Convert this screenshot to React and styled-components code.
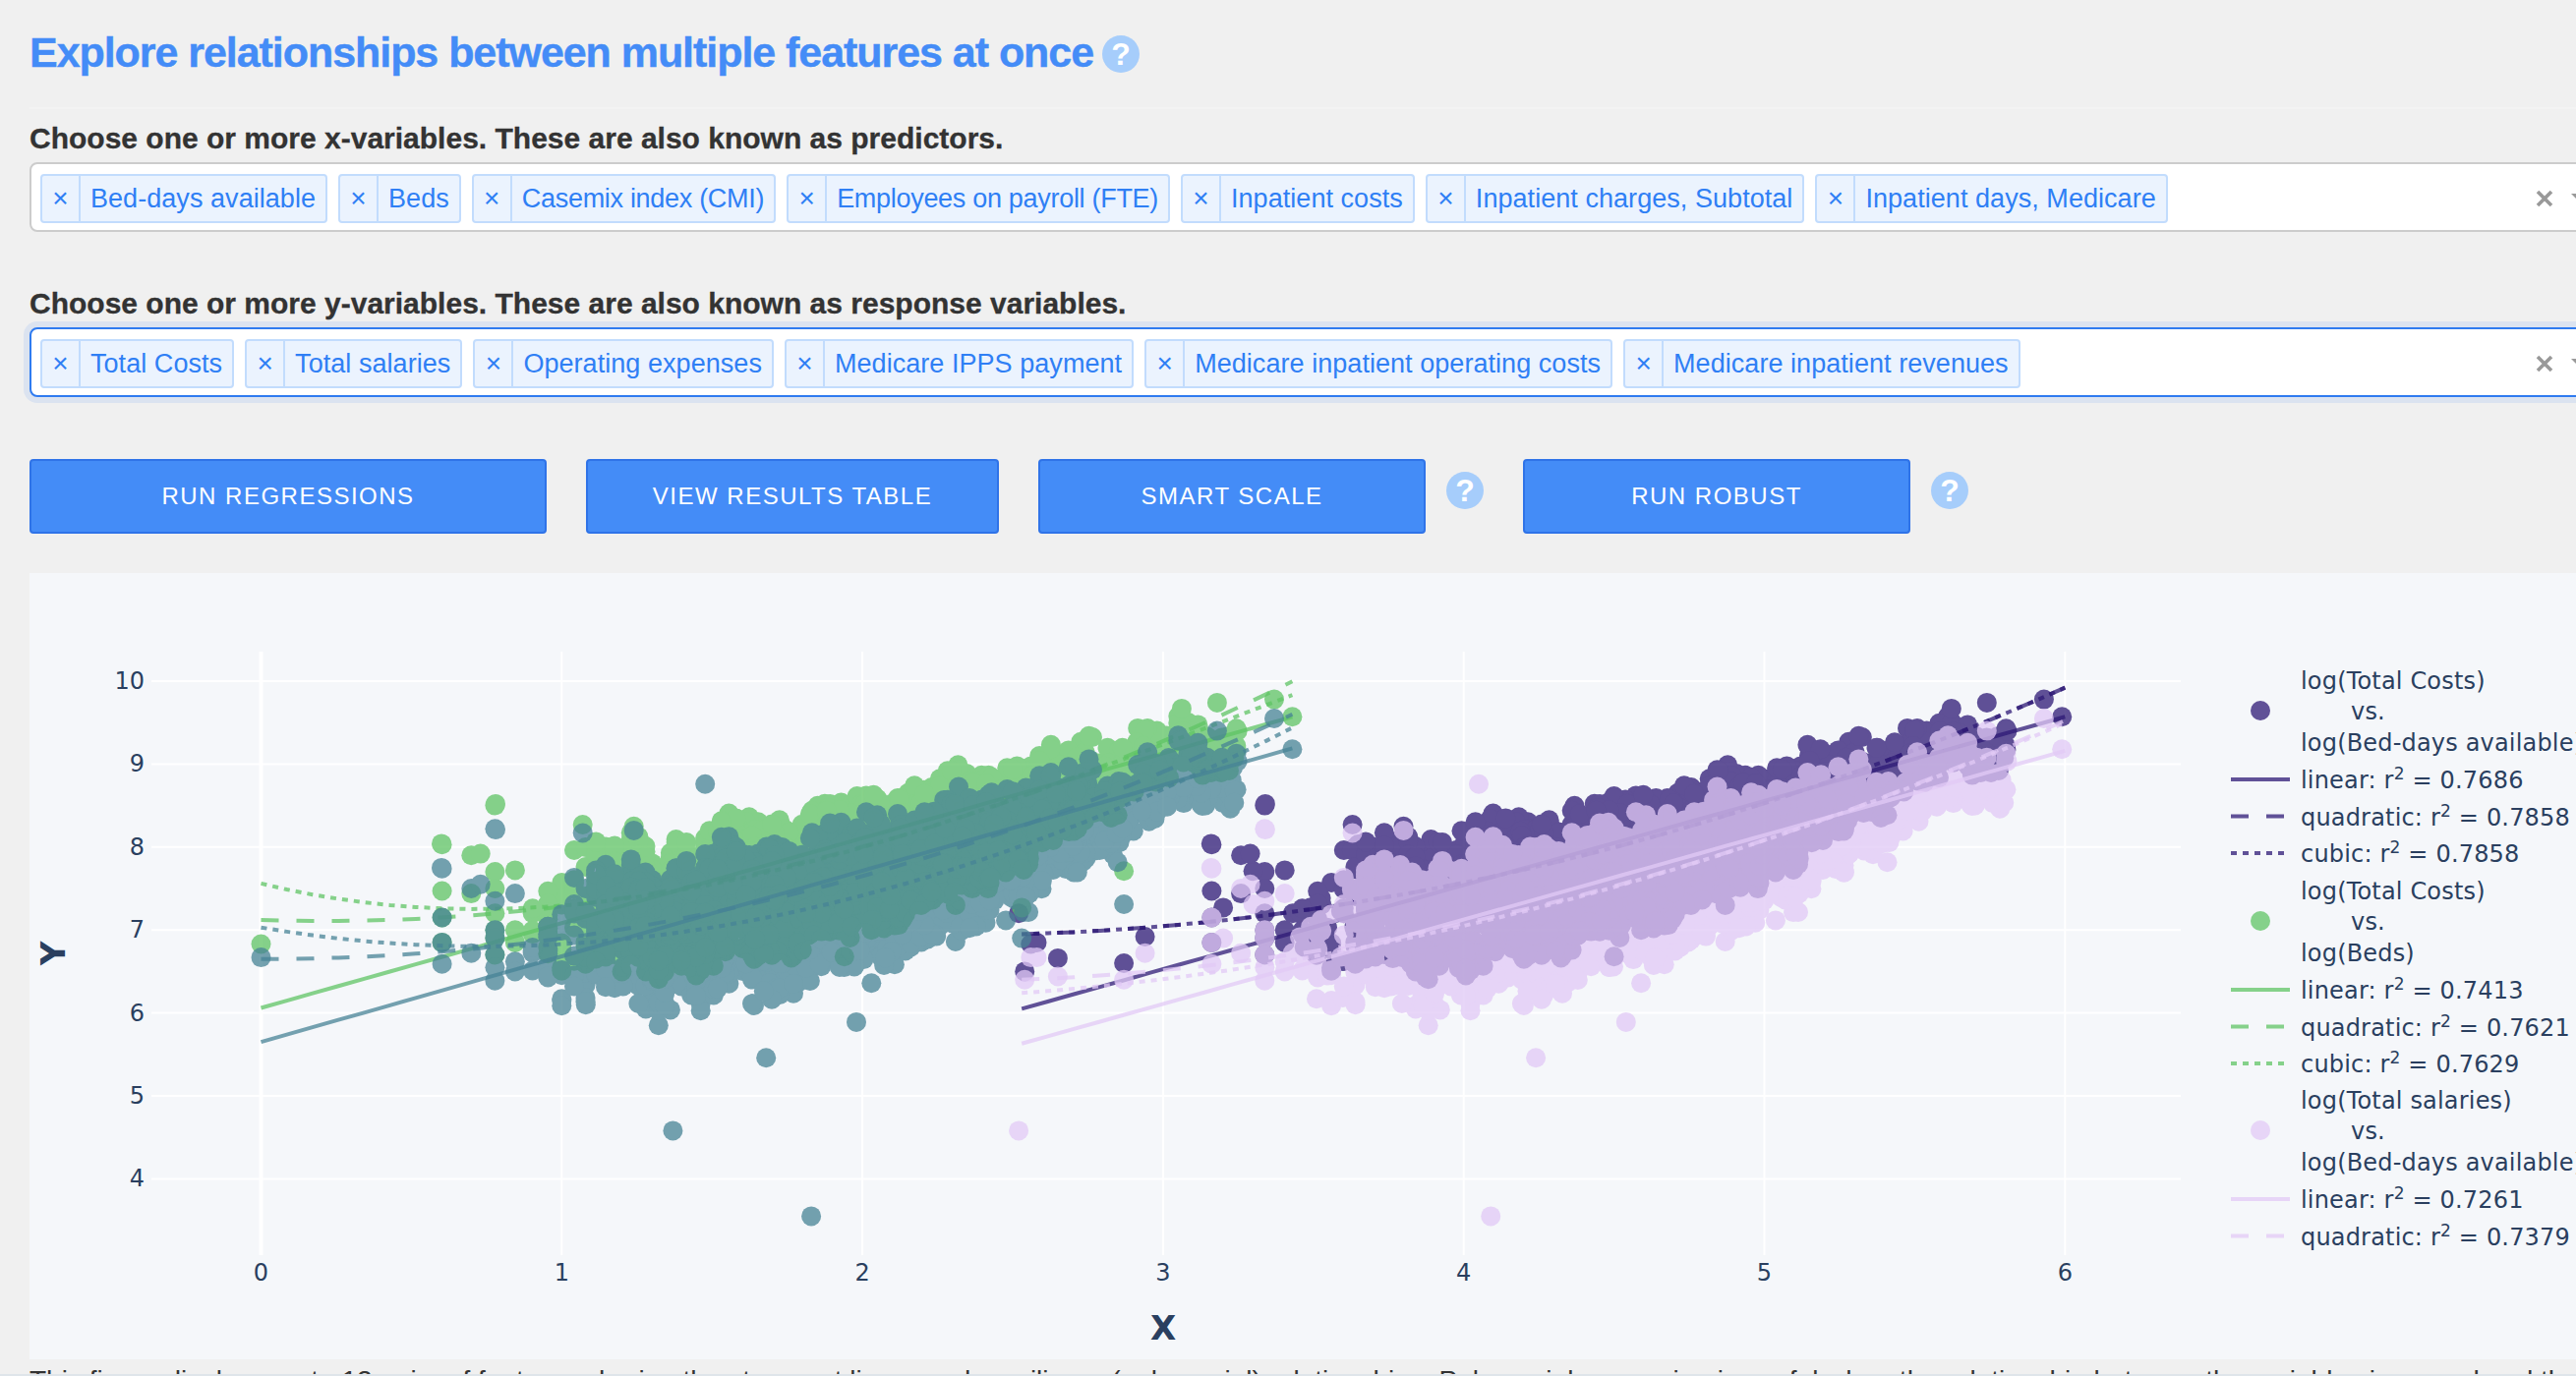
import React, { useMemo } from 'react';
import styled, { createGlobalStyle } from 'styled-components';

const GlobalStyle = createGlobalStyle`
  html, body {
    margin: 0;
    padding: 0;
    background: #f0f0f0;
    overflow: hidden;
  }
  #root {
    width: 2620px;
    height: 1400px;
    overflow: hidden;
  }
`;

const Page = styled.div`
  position: relative;
  width: 2620px;
  height: 1400px;
  overflow: hidden;
  padding-left: 30px;
  box-sizing: border-box;
  font-family: 'Liberation Sans', Arial, sans-serif;
  color: #333;
`;

const TitleRow = styled.div`
  display: flex;
  align-items: center;
  gap: 9px;
  height: 50px;
  padding-top: 30px;
`;

const Title = styled.h1`
  margin: 0 0 5px;
  font-size: 43px;
  line-height: 50px;
  font-weight: 700;
  letter-spacing: -1.05px;
  -webkit-text-stroke: 0.4px #448cf7;
  color: #448cf7;
  white-space: nowrap;
`;

const Help = styled.span`
  display: inline-flex;
  align-items: center;
  justify-content: center;
  flex: none;
  width: 38px;
  height: 38px;
  border-radius: 50%;
  background: #a6cdfb;
  color: #fff;
  font-size: 32px;
  font-weight: 700;
  line-height: 1;
  margin-top: ${(p) => p.$top || 0}px;
`;

const Rule = styled.hr`
  margin: 29px 0 0;
  border: 0;
  height: 2px;
  background: #f3f3f3;
`;

const Label = styled.div`
  margin-top: ${(p) => p.$top}px;
  height: 30px;
  line-height: 30px;
  font-size: 30px;
  font-weight: 700;
  -webkit-text-stroke: 0.3px #333;
  color: #333;
  white-space: nowrap;
`;

const Select = styled.div`
  display: flex;
  align-items: center;
  box-sizing: border-box;
  width: 2640px;
  height: 71px;
  margin-top: 9px;
  padding: 3px 0 0 9px;
  gap: 11px;
  background: #fff;
  border: 2px solid ${(p) => (p.$focused ? '#2f7bf0' : '#ccc')};
  border-radius: 8px;
  box-shadow: ${(p) => (p.$focused ? '0 0 0 6px #dbe3f0' : 'none')};
`;

const Tag = styled.div`
  display: flex;
  align-items: stretch;
  flex: none;
  box-sizing: border-box;
  height: 50px;
  background: #ebf3fe;
  border: 2px solid #c2dcfd;
  border-radius: 4px;
  color: #2f7ff5;
  font-size: 27px;
`;

const TagRemove = styled.span`
  display: flex;
  align-items: center;
  justify-content: center;
  box-sizing: border-box;
  width: 39px;
  border-right: 2px solid #c2dcfd;
  font-size: 28px;
`;

const TagLabel = styled.span`
  display: flex;
  align-items: center;
  padding: 0 10px;
  letter-spacing: ${(p) => (p.$tight ? '-0.3px' : '0.05px')};
  white-space: nowrap;
`;

const Controls = styled.div`
  display: flex;
  align-items: center;
  gap: 18px;
  margin-left: auto;
  margin-right: 33px;
`;

const ClearIcon = styled.svg`
  display: block;
  width: 18px;
  height: 18px;
`;

const Arrow = styled.span`
  display: block;
  width: 0;
  height: 0;
  border-style: solid;
  border-width: 10px 10px 0;
  border-color: #999 transparent transparent;
`;

const ButtonRow = styled.div`
  display: flex;
  align-items: flex-start;
  gap: 40px;
  height: 76px;
  margin-top: 63px;
`;

const ButtonGroup = styled.div`
  display: flex;
  align-items: flex-start;
  gap: 21px;
`;

const ActionButton = styled.button`
  box-sizing: border-box;
  width: ${(p) => p.$width}px;
  height: 76px;
  padding: 0;
  background: #448cf7;
  border: 2px solid #2f73e8;
  border-radius: 4px;
  color: #fff;
  font-family: inherit;
  font-size: 24px;
  letter-spacing: 1.5px;
  text-transform: uppercase;
`;

const PlotFrame = styled.div`
  width: 2620px;
  height: 800px;
  margin-top: 40px;
  background: #f5f7fa;
`;

const PlotSvg = styled.svg`
  display: block;
  width: 2620px;
  height: 800px;
  font-family: 'DejaVu Sans', Verdana, sans-serif;
  fill: #2a3f5f;
`;

const LegendText = styled.text`
  font-size: 24px;
  letter-spacing: 0.18px;
`;

const Note = styled.p`
  margin: 5px 0 0;
  font-size: 28px;
  line-height: 34px;
  color: #333;
  white-space: nowrap;
`;

const BottomEdge = styled.div`
  position: absolute;
  left: 0;
  right: 0;
  bottom: 0;
  height: 2px;
  background: #dfe5ea;
`;

const X_OPTIONS = [
  'Bed-days available',
  'Beds',
  'Casemix index (CMI)',
  'Employees on payroll (FTE)',
  'Inpatient costs',
  'Inpatient charges, Subtotal',
  'Inpatient days, Medicare',
];

const Y_OPTIONS = [
  'Total Costs',
  'Total salaries',
  'Operating expenses',
  'Medicare IPPS payment',
  'Medicare inpatient operating costs',
  'Medicare inpatient revenues',
];

// these two set narrower than the others in the reference
const TIGHT_OPTIONS = ['Casemix index (CMI)', 'Employees on payroll (FTE)'];

// chart scales, page pixels
const px = (v) => 265.5 + 305.8 * v;
const py = (v) => 693 + (10 - v) * 84.4;

const PURPLE = '#2d1975';
const GREEN = '#5fc464';
const LILAC = '#e1c9f6';
const TEAL = '#478395';

const rng = (seed) => () => {
  seed |= 0;
  seed = (seed + 0x6d2b79f5) | 0;
  let t = Math.imul(seed ^ (seed >>> 15), 1 | seed);
  t = (t + Math.imul(t ^ (t >>> 7), 61 | t)) ^ t;
  return ((t ^ (t >>> 14)) >>> 0) / 4294967296;
};

const ENVELOPE = [
  [0.9, 7.7, 6.75],
  [1, 8.1, 6.6],
  [1.3, 8.1, 6.5],
  [1.6, 8.3, 6.6],
  [1.84, 8.45, 6.85],
  [2.09, 8.7, 7.1],
  [2.31, 8.85, 7.35],
  [2.54, 9.05, 7.85],
  [2.75, 9.25, 8.25],
  [3, 9.45, 8.8],
  [3.25, 9.5, 8.95],
];

const envelope = (x) => {
  const wobble = 0.09 * Math.sin(x * 17) + 0.06 * Math.sin(x * 41 + 1);
  for (let i = 1; i < ENVELOPE.length; i++) {
    const [x1, t1, b1] = ENVELOPE[i];
    if (x <= x1) {
      const [x0, t0, b0] = ENVELOPE[i - 1];
      const k = Math.max(0, (x - x0) / (x1 - x0));
      return [t0 + (t1 - t0) * k + wobble, b0 + (b1 - b0) * k + wobble];
    }
  }
  const last = ENVELOPE[ENVELOPE.length - 1];
  return [last[1], last[2]];
};

// [log beds, log costs, log salaries, log bed-days]
const LOOSE_POINTS = [
  [0, 6.83, 6.67],
  [0.602, 8.03, 7.74],
  [0.602, 7.47, 7.15],
  [0.602, 7.15, 6.85],
  [0.602, 6.85, 6.59],
  [0.699, 7.9, 7.5],
  [0.699, 7.44, 6.72],
  [0.778, 8.5, 8.22],
  [0.778, 7.7, 7.35],
  [0.778, 7.5, 7.0],
  [0.778, 7.2, 6.9],
  [0.778, 7.0, 6.7],
  [0.778, 6.9, 6.55],
  [0.778, 6.7, 6.39],
  [0.845, 7.72, 7.44],
  [0.845, 7.0, 6.62],
  [0.845, 6.85, 6.5],
  [1.477, 8.0, 8.76, 4.05],
  [1.37, 7.2, 4.58, 2.52],
  [1.68, 7.0, 5.46],
  [1.98, 7.4, 5.89],
  [1.83, 7.3, 3.55, 4.09],
  [1.94, 6.68, 6.9],
  [2.53, 7.27, 6.9, 3.2],
  [2.87, 7.71, 7.31, 3.3],
  [0.78, 8.52, 8.21, 3.34],
  [0.6, 8.04, 7.75, 3.16],
  [0.73, 7.92, 7.55, 3.29],
  [1.07, 8.27, 8.17, 3.63],
  [1.24, 8.25, 8.2, 3.8],
  [3.43, 9.57, 9.18],
  [3.18, 9.74, 9.4],
  [3.37, 9.78, 9.55],
  [3.2, 9.2, 8.53],
  [1.2, 6.5, 6.4, 2.54],
  [1.25, 6.85, 6.67, 2.58],
  [1.3, 6.66, 6.44, 2.65],
  [1.4, 6.6, 6.4, 2.87],
  [1.5, 6.92, 6.72, 2.94],
  [1.08, 6.6, 6.1],
  [1.28, 6.5, 6.05],
  [1.64, 6.65, 6.09],
  [2.03, 7.0, 6.36],
  [2.31, 7.3, 6.86],
];

const buildPoints = () => {
  const rand = rng(20481);
  const points = LOOSE_POINTS.map(([x, g, t, d]) => [x, g, t, d === undefined ? x + 2.56 : d]);
  let made = 0;
  while (made < 2400) {
    const n = (rand() + rand() + rand() + rand() - 2) * 1.05 + 1.98;
    if (n < 0.9 || n > 3.25) continue;
    // the small hospitals stand in thin columns, no solid wall at the left
    if (n < 1.1 && rand() < 0.55) continue;
    const x = Math.log10(Math.round(10 ** n));
    const [top, bottom] = envelope(x);
    const spread = rand() < 0.6 ? rand() : (rand() + rand()) / 2;
    const stray = rand() < 0.1 ? (rand() - 0.5) * 0.5 : 0;
    const g = bottom + (top - bottom) * spread + stray;
    const t = g - (0.18 + 0.4 * rand());
    points.push([x, g, t, x + 2.56 - (rand() < 0.25 ? rand() * 0.06 : 0)]);
    made++;
  }
  return points;
};

const sample = (fn, from, to) => {
  const out = [];
  for (let i = 0; i <= 40; i++) {
    const x = from + ((to - from) * i) / 40;
    out.push(`${px(x).toFixed(1)},${py(fn(x)).toFixed(1)}`);
  }
  return out.join(' ');
};

const DASHES = { linear: undefined, quadratic: '18 18', cubic: '6 6' };

const SERIES = [
  {
    color: PURPLE,
    xKey: 3,
    yKey: 1,
    from: 2.53,
    to: 6,
    fits: {
      linear: (x) => 6.05 + ((x - 2.53) * 3.52) / 3.47,
      quadratic: (x) => 6.95 + 0.103 * (x - 2.53) + 0.217 * (x - 2.53) ** 2,
      cubic: (x) => 6.95 + 0.103 * (x - 2.53) + 0.217 * (x - 2.53) ** 2,
    },
  },
  {
    color: GREEN,
    xKey: 0,
    yKey: 1,
    from: 0,
    to: 3.43,
    fits: {
      linear: (x) => 6.06 + (x * 3.51) / 3.43,
      quadratic: (x) => 7.12 - 0.115 * x + 0.278 * x * x,
      cubic: (x) => 7.56 - 0.893 * x + 0.698 * x * x - 0.0713 * x ** 3,
    },
  },
  {
    color: LILAC,
    xKey: 3,
    yKey: 2,
    from: 2.53,
    to: 6,
    fits: {
      linear: (x) => 5.63 + ((x - 2.53) * 3.53) / 3.47,
      quadratic: (x) => 6.4 + 0.141 * (x - 2.53) + 0.219 * (x - 2.53) ** 2,
      cubic: (x) => 6.24 + 0.266 * (x - 2.53) + 0.194 * (x - 2.53) ** 2,
    },
  },
  {
    color: TEAL,
    xKey: 0,
    yKey: 2,
    from: 0,
    to: 3.43,
    fits: {
      linear: (x) => 5.65 + (x * 3.54) / 3.43,
      quadratic: (x) => 6.65 - 0.004 * x + 0.252 * x * x,
      cubic: (x) => 7.03 - 0.6256 * x + 0.4403 * x * x - 0.0155 * x ** 3,
    },
  },
];

const LEGEND = [
  { color: PURPLE, names: ['log(Total Costs)', 'log(Bed-days available)'], top: 693, r2: ['0.7686', '0.7858', '0.7858'] },
  { color: GREEN, names: ['log(Total Costs)', 'log(Beds)'], top: 907, r2: ['0.7413', '0.7621', '0.7629'] },
  { color: LILAC, names: ['log(Total salaries)', 'log(Bed-days available)'], top: 1120, r2: ['0.7261', '0.7379'] },
];

const LegendFit = ({ kind, value, y, color }) => (
  <g>
    <line
      x1="2269"
      x2="2329"
      y1={y - 1}
      y2={y - 1}
      stroke={color}
      strokeWidth="4"
      strokeOpacity="0.75"
      strokeDasharray={DASHES[kind]}
    />
    <LegendText x="2340" y={y + 8}>
      {kind}: r
      <tspan dy="-9" fontSize="17">2</tspan>
      <tspan dy="9"> = {value}</tspan>
    </LegendText>
  </g>
);

const Chart = () => {
  const points = useMemo(buildPoints, []);
  const xTicks = [0, 1, 2, 3, 4, 5, 6];
  const yTicks = [4, 5, 6, 7, 8, 9, 10];

  return (
    <PlotSvg viewBox="30 583 2620 800">
      {xTicks.map((v) => (
        <line key={v} x1={px(v)} x2={px(v)} y1="663" y2="1277" stroke="#fff" strokeWidth={v === 0 ? 4 : 2} />
      ))}
      {yTicks.map((v) => (
        <line key={v} x1="154" x2="2218" y1={py(v)} y2={py(v)} stroke="#fff" strokeWidth="2" />
      ))}

      {/* trace order matters: later traces cover the fit lines of earlier ones */}
      {SERIES.map((s) => (
        <g key={s.color}>
          <g fill={s.color} opacity="0.75">
            {points.map((p, i) => (
              <circle key={i} cx={px(p[s.xKey]).toFixed(1)} cy={py(p[s.yKey]).toFixed(1)} r="10" />
            ))}
          </g>
          <g fill="none" stroke={s.color} strokeWidth="4" strokeOpacity="0.75">
            {Object.keys(s.fits).map((kind) => (
              <polyline key={kind} points={sample(s.fits[kind], s.from, s.to)} strokeDasharray={DASHES[kind]} />
            ))}
          </g>
        </g>
      ))}

      {yTicks.map((v) => (
        <text key={v} x="147" y={py(v) + 8} fontSize="24" textAnchor="end">{v}</text>
      ))}
      {xTicks.map((v) => (
        <text key={v} x={px(v)} y="1303" fontSize="24" textAnchor="middle">{v}</text>
      ))}
      <text x="1183" y="1363" fontSize="34" fontWeight="700" textAnchor="middle">X</text>
      <text transform="translate(66 970) rotate(-90)" fontSize="34" fontWeight="700" textAnchor="middle">Y</text>

      {LEGEND.map((entry) => (
        <g key={entry.top}>
          <circle cx="2299" cy={entry.top + 30} r="10" fill={entry.color} opacity="0.75" />
          <LegendText x="2340" y={entry.top + 8}>{entry.names[0]}</LegendText>
          <LegendText x="2391" y={entry.top + 39}>vs.</LegendText>
          <LegendText x="2340" y={entry.top + 71}>{entry.names[1]}</LegendText>
          {entry.r2.map((value, i) => (
            <LegendFit
              key={value + i}
              kind={['linear', 'quadratic', 'cubic'][i]}
              value={value}
              y={entry.top + 101 + i * 37.5}
              color={entry.color}
            />
          ))}
        </g>
      ))}
    </PlotSvg>
  );
};

const MultiSelect = ({ options, focused }) => (
  <Select $focused={focused}>
    {options.map((option) => (
      <Tag key={option}>
        <TagRemove>×</TagRemove>
        <TagLabel $tight={TIGHT_OPTIONS.includes(option)}>{option}</TagLabel>
      </Tag>
    ))}
    <Controls>
      <ClearIcon viewBox="0 0 18 18">
        <path d="M2 2 L16 16 M16 2 L2 16" stroke="#999" strokeWidth="3.6" fill="none" />
      </ClearIcon>
      <Arrow />
    </Controls>
  </Select>
);

export default function App() {
  return (
    <Page>
      <GlobalStyle />
      <TitleRow>
        <Title>Explore relationships between multiple features at once</Title>
        <Help>?</Help>
      </TitleRow>
      <Rule />
      <Label $top={15}>Choose one or more x-variables. These are also known as predictors.</Label>
      <MultiSelect options={X_OPTIONS} />
      <Label $top={58}>Choose one or more y-variables. These are also known as response variables.</Label>
      <MultiSelect options={Y_OPTIONS} focused />
      <ButtonRow>
        <ActionButton $width={526}>Run regressions</ActionButton>
        <ActionButton $width={420}>View results table</ActionButton>
        <ButtonGroup>
          <ActionButton $width={394}>Smart scale</ActionButton>
          <Help $top={13}>?</Help>
        </ButtonGroup>
        <ButtonGroup>
          <ActionButton $width={394}>Run robust</ActionButton>
          <Help $top={13}>?</Help>
        </ButtonGroup>
      </ButtonRow>
      <PlotFrame>
        <Chart />
      </PlotFrame>
      <Note>
        This figure displays up to 12 pairs of features sharing the strongest linear and curvilinear (polynomial) relationships. Polynomial regression is useful when the relationship between the variables is curved and the residuals are not random across the range of values.
      </Note>
      <BottomEdge />
    </Page>
  );
}
